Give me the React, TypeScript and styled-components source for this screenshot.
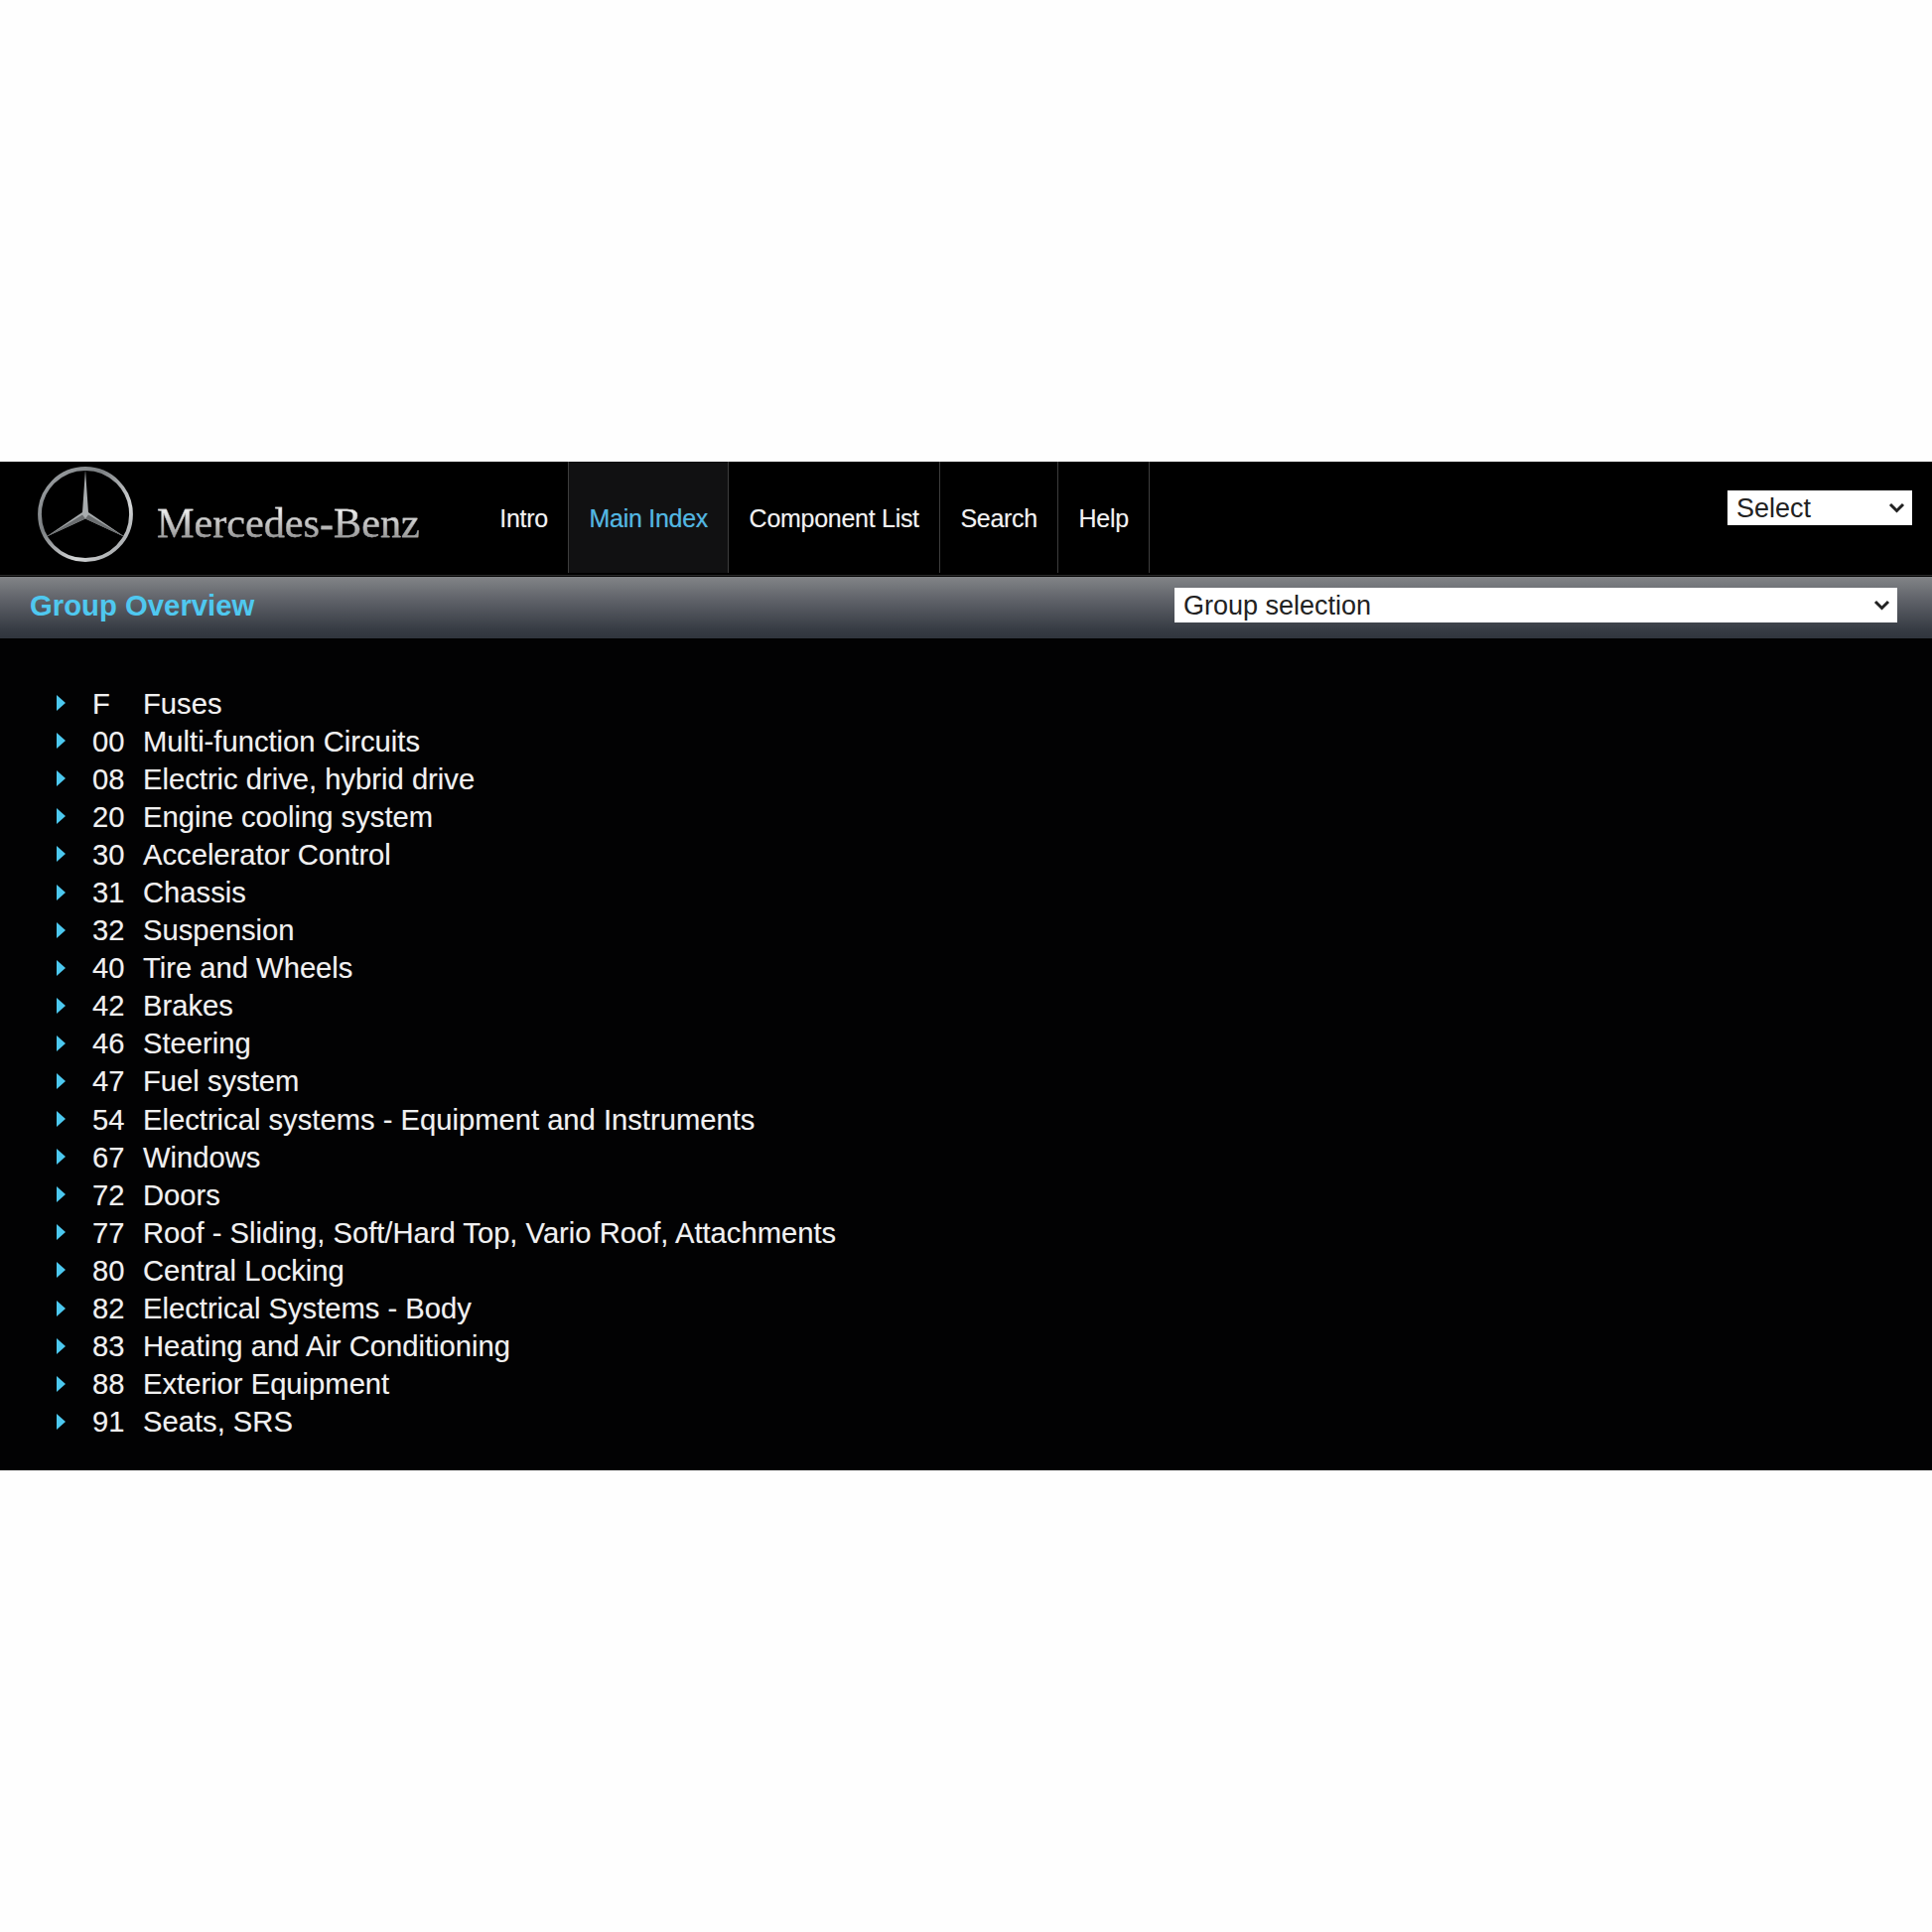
import React from "react";
import styled, { createGlobalStyle } from "styled-components";

const GROUPS: [string, string][] = [
  ["F", "Fuses"],
  ["00", "Multi-function Circuits"],
  ["08", "Electric drive, hybrid drive"],
  ["20", "Engine cooling system"],
  ["30", "Accelerator Control"],
  ["31", "Chassis"],
  ["32", "Suspension"],
  ["40", "Tire and Wheels"],
  ["42", "Brakes"],
  ["46", "Steering"],
  ["47", "Fuel system"],
  ["54", "Electrical systems - Equipment and Instruments"],
  ["67", "Windows"],
  ["72", "Doors"],
  ["77", "Roof - Sliding, Soft/Hard Top, Vario Roof, Attachments"],
  ["80", "Central Locking"],
  ["82", "Electrical Systems - Body"],
  ["83", "Heating and Air Conditioning"],
  ["88", "Exterior Equipment"],
  ["91", "Seats, SRS"],
];

const NAV_ITEMS = ["Intro", "Main Index", "Component List", "Search", "Help"];

const GlobalStyle = createGlobalStyle`
  html, body {
    margin: 0;
    padding: 0;
    background: #fefefe;
  }
  body {
    font-family: "Liberation Sans", Arial, sans-serif;
  }
`;

const Page = styled.div`
  width: 1946px;
  height: 1946px;
  padding-top: 465px;
  box-sizing: border-box;
`;

const Panel = styled.div`
  height: 1016px;
  background: #020203;
  color: #f1f1f1;
`;

const Header = styled.header`
  height: 115px;
  display: flex;
  align-items: flex-start;
  background: #000;
  border-bottom: 1px solid #2c2c2c;
  box-sizing: border-box;
`;

const Brand = styled.div`
  width: 483px;
  display: flex;
  align-items: center;
  padding-left: 36px;
  height: 112px;
  box-sizing: border-box;
  flex: none;
`;

const LogoMark = styled.svg`
  margin-bottom: 6px;
  flex: none;
  filter: blur(0.5px);
`;

const Wordmark = styled.span`
  margin-left: 22px;
  margin-top: 11px;
  font-family: "Liberation Serif", "Times New Roman", serif;
  font-size: 42.2px;
  white-space: nowrap;
  -webkit-text-stroke: 0.3px #b5b5b5;
  background: linear-gradient(180deg, #eeeeee 25%, #9a9a9a 78%);
  -webkit-background-clip: text;
  background-clip: text;
  color: transparent;
`;

const Nav = styled.nav`
  display: flex;
  height: 112px;
`;

const NavItem = styled.a<{ $active?: boolean }>`
  display: flex;
  align-items: center;
  padding: 2px 20.3px 0;
  font-size: 25px;
  letter-spacing: -0.28px;
  color: ${(p) => (p.$active ? "#4cb8e6" : "#f2f2f2")};
  background: ${(p) => (p.$active ? "#111112" : "transparent")};
  border-right: 1px solid #3d3d3d;
  box-sizing: border-box;
  white-space: nowrap;
  text-shadow: 0 0 1px rgba(255, 255, 255, 0.3);
`;

const SelectBox = styled.div<{ $width: number }>`
  position: relative;
  width: ${(p) => p.$width}px;
  height: 35px;
  flex: none;
`;

const HeaderSelectBox = styled(SelectBox)`
  margin: 29px 20px 0 auto;
`;

const NativeSelect = styled.select`
  appearance: none;
  display: block;
  width: 100%;
  height: 100%;
  padding: 0 9px;
  border: none;
  border-radius: 0;
  background-color: #fff;
  color: #222;
  font-family: "Liberation Sans", Arial, sans-serif;
  font-size: 27px;
`;

const Chevron = styled.svg`
  position: absolute;
  right: 7px;
  top: 12px;
  width: 17px;
  height: 11px;
  pointer-events: none;
`;

const TitleBar = styled.div`
  height: 62px;
  margin-top: 1px;
  display: flex;
  align-items: center;
  justify-content: space-between;
  padding: 0 35px 5px 30px;
  background: linear-gradient(180deg, #828487 0%, #5d6067 40%, #373c44 85%, #30353d 100%);
  box-sizing: border-box;
`;

const Title = styled.h1`
  margin: 0;
  font-size: 29.3px;
  font-weight: 700;
  color: #4fc8f0;
`;

const GroupList = styled.ul`
  list-style: none;
  margin: 0;
  padding: 47px 0 0 57px;
`;

const GroupRow = styled.li`
  display: flex;
  align-items: center;
  height: 38.1px;
  font-size: 29.2px;
  white-space: nowrap;
  text-shadow: 0 0 1px rgba(255, 255, 255, 0.3);
`;

const Arrow = styled.span`
  width: 0;
  height: 0;
  margin-right: 27px;
  margin-top: -2px;
  border-left: 9px solid #4cc8ef;
  border-top: 8px solid transparent;
  border-bottom: 8px solid transparent;
`;

const GroupCode = styled.span`
  width: 51px;
  flex: none;
`;

const Star = () => (
  <LogoMark width="100" height="100" viewBox="0 0 100 100" fill="none">
    <defs>
      <linearGradient id="ring" x1="0" y1="0" x2="1" y2="1">
        <stop offset="0" stopColor="#a2a6a9" />
        <stop offset="0.35" stopColor="#7c8083" />
        <stop offset="0.7" stopColor="#d4d6d7" />
        <stop offset="1" stopColor="#8b8f92" />
      </linearGradient>
    </defs>
    <circle cx="50" cy="50" r="46" stroke="url(#ring)" strokeWidth="3.8" />
    <path d="M50 5 L53 48 L90 73 L50 54.5 L10 73 L47 48 Z" fill="#a8acae" />
    <path d="M50 54.5 L90 73 L53 50.5 Z M50 54.5 L10 73 L47 50.5 Z" fill="#6a6d6f" />
  </LogoMark>
);

const DownChevron = () => (
  <Chevron viewBox="0 0 17 11" fill="none">
    <path d="M2 2 L8.5 8.5 L15 2" stroke="#222" strokeWidth="3" />
  </Chevron>
);

export default function App() {
  return (
    <Page>
      <GlobalStyle />
      <Panel>
        <Header>
          <Brand>
            <Star />
            <Wordmark>Mercedes-Benz</Wordmark>
          </Brand>
          <Nav>
            {NAV_ITEMS.map((item) => (
              <NavItem key={item} $active={item === "Main Index"}>
                {item}
              </NavItem>
            ))}
          </Nav>
          <HeaderSelectBox $width={186}>
            <NativeSelect defaultValue="Select">
              <option>Select</option>
            </NativeSelect>
            <DownChevron />
          </HeaderSelectBox>
        </Header>
        <TitleBar>
          <Title>Group Overview</Title>
          <SelectBox $width={728}>
            <NativeSelect defaultValue="Group selection">
              <option>Group selection</option>
            </NativeSelect>
            <DownChevron />
          </SelectBox>
        </TitleBar>
        <GroupList>
          {GROUPS.map(([code, name]) => (
            <GroupRow key={code}>
              <Arrow />
              <GroupCode>{code}</GroupCode>
              {name}
            </GroupRow>
          ))}
        </GroupList>
      </Panel>
    </Page>
  );
}
